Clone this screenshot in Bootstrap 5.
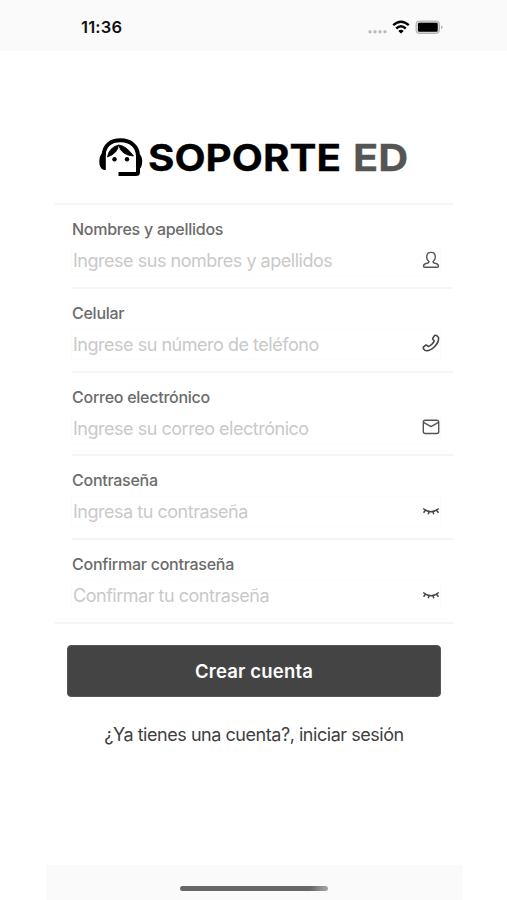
<!DOCTYPE html>
<html lang="es">
<head>
<meta charset="utf-8">
<meta name="viewport" content="width=device-width, initial-scale=1">
<title>Soporte ED</title>
<link href="https://cdn.jsdelivr.net/npm/bootstrap@5.3.0/dist/css/bootstrap.min.css" rel="stylesheet">
<style>
body{font-family:Inter,"Liberation Sans",sans-serif;background:#fff;height:900px;overflow:hidden}
.status{height:51px;background:#fafafa;padding:3px 64px 0 81px}
.clock{font-size:16.5px;font-weight:600;color:#111;letter-spacing:.2px;line-height:20px}
.brand{height:152px;padding:85px 0 0 98px}
.brand-text{font-size:37px;font-weight:700;line-height:43px;color:#000;transform-origin:0 50%;white-space:nowrap;-webkit-text-stroke:.3px currentColor}
.w-main{width:191px;transform:scaleX(1.092)}
.w-ed{width:55px;margin-left:14px;color:#555;transform:scaleX(1.12)}
.form-area{width:398px;margin-left:55px;border-top:2px solid #f5f5f5;border-bottom:2px solid #f5f5f5;height:421px}
.field{height:83.75px;margin-left:17px;padding-top:13.2px;border-bottom:2px solid #f5f5f5}
.field:last-child{border-bottom:0}
.form-label{font-size:16px;font-weight:500;line-height:22px;color:#6b6b6b;letter-spacing:-.26px}
.entry{height:31px;margin:5px 12px 0 -1px;border:1px solid #fcfcfc;width:370px}
.entry .form-control{font-size:18px;line-height:29px;color:#444;background:transparent;letter-spacing:-.48px;text-indent:1px}
.entry .form-control::placeholder{color:#c9c9c9;opacity:1}
.entry svg{flex:none;margin:-2px .5px 0 0}
.btn-create{width:374px;height:52px;margin:21px 0 0 67px;background:#444;color:#fff;font-size:18.5px;font-weight:600;letter-spacing:.18px;border-radius:4px;border:1px solid #555;padding-top:1px}
.login{font-size:18px;line-height:24px;color:#3f3f3f;margin-top:26px;letter-spacing:-.46px;padding-left:1px}
.home{width:416px;height:35px;margin-left:46px;background:#fafafa;padding-top:21px}
.home-bar{width:148px;height:5px;margin-left:134px;border-radius:3px;background:linear-gradient(90deg,#666 88%,#aaa)}
</style>
<script src="https://cdn.jsdelivr.net/npm/bootstrap@5.3.0/dist/js/bootstrap.bundle.min.js"></script>
</head>
<body class="d-flex flex-column">
<header class="status d-flex align-items-center justify-content-between">
  <span class="clock">11:36</span>
  <svg width="76" height="18" viewBox="367 18 76 18">
    <g fill="#bdbdbd"><circle cx="370" cy="31.8" r="1.7"/><circle cx="375" cy="31.8" r="1.7"/><circle cx="380" cy="31.8" r="1.7"/><circle cx="385" cy="31.8" r="1.7"/></g>
    <g fill="none" stroke="#000" stroke-width="2.4"><path d="M393.2 25.2Q401 18.3 408.8 25.2M396.2 28.5Q401 24.2 405.8 28.5"/></g>
    <path d="M398.3 30.9Q401 28.8 403.7 30.9L401 33.5Z"/>
    <rect x="416" y="21" width="23.5" height="12.5" rx="3.2" fill="#d2d2d2" stroke="#b5b5b5"/>
    <rect x="418" y="22.8" width="19.7" height="9" rx="1.2"/>
    <path d="M441 25.2q3 2 0 4z" fill="#b5b5b5"/>
  </svg>
</header>
<main>
  <div class="brand d-flex align-items-start">
    <svg width="46" height="42" viewBox="98 136 46 42" class="flex-shrink-0">
      <path d="M103.5 156C104 145 111 140.3 120.7 140.3S137.8 146 138 156V172.5Q138 174 136 174H118.5" fill="none" stroke="#000" stroke-width="4"/>
      <path d="M105.8 152.8V170H104Q99.3 168.5 99.3 161.5T103 153ZM136 152.8V170H138.5Q142.2 167.5 142.2 161.5T138.5 153Z"/>
      <path d="M107.5 157Q109 147.5 118.5 145Q118 153 107.5 157ZM118.5 145Q126 145.5 133.5 156Q121.5 155.5 118.5 145Z" stroke="#000" stroke-width=".8"/>
      <circle cx="114.5" cy="159.3" r="2.2"/><circle cx="127" cy="159.3" r="2.2"/>
    </svg>
    <div class="brand-text w-main ms-1">SOPORTE</div>
    <div class="brand-text w-ed">ED</div>
  </div>
  <form class="form-area">
    <div class="field">
      <label class="form-label d-block mb-0" for="nombre">Nombres y apellidos</label>
      <div class="entry d-flex align-items-center">
        <input id="nombre" class="form-control border-0 p-0" placeholder="Ingrese sus nombres y apellidos">
        <svg width="18" height="18" viewBox="0 0 18 18" fill="none" stroke="#555" stroke-width="1.4" stroke-linejoin="round"><path d="M7 10.5C4.5 9 4.6 6.5 4.8 5C5.2 .2 12.8 .2 13.2 5C13.4 6.5 13.5 9 11 10.5Q10.9 11.7 13 12.3Q16.5 13 16.5 15.2Q16.5 16.2 15 16.2H3Q1.5 16.2 1.5 15.2Q1.5 13 5 12.3Q7.1 11.7 7 10.5Z"/></svg>
      </div>
    </div>
    <div class="field">
      <label class="form-label d-block mb-0" for="celular">Celular</label>
      <div class="entry d-flex align-items-center">
        <input id="celular" class="form-control border-0 p-0" placeholder="Ingrese su número de teléfono">
        <svg width="18" height="18" viewBox="0 0 18 18" fill="none" stroke="#444" stroke-width="1.6" stroke-linejoin="round"><path d="M12.6 1.5C14 .8 16.2 2.3 16.6 4C17 9.5 10 16.8 4.3 16.7C2.7 16.6 .8 14.7 1.3 13.2L3.8 11.1Q4.5 10.8 5.2 11.5L6.4 12.6C8.5 12 11.6 9 12.2 6.8L11 5.5Q10.4 4.8 10.8 4.1Z"/></svg>
      </div>
    </div>
    <div class="field">
      <label class="form-label d-block mb-0" for="correo">Correo electrónico</label>
      <div class="entry d-flex align-items-center">
        <input id="correo" class="form-control border-0 p-0" placeholder="Ingrese su correo electrónico">
        <svg width="18" height="18" viewBox="0 0 18 18" fill="none" stroke="#555" stroke-width="1.4" stroke-linejoin="round"><rect x="1.3" y="2.3" width="15.4" height="13.2" rx="1.8"/><path d="M1.5 4.4L9 8.6L16.5 4.4"/></svg>
      </div>
    </div>
    <div class="field">
      <label class="form-label d-block mb-0" for="clave">Contraseña</label>
      <div class="entry d-flex align-items-center">
        <input id="clave" type="password" class="form-control border-0 p-0" placeholder="Ingresa tu contraseña">
        <svg width="18" height="18" viewBox="0 0 18 18" fill="none" stroke="#444" stroke-width="1.5"><path d="M1.2 6.5Q9 13.1 16.8 6.5M3.4 8.2L1.6 10.7M7 9.7L6.2 12.2M11 9.7L11.8 12.2M14.6 8.2L16.4 10.7"/></svg>
      </div>
    </div>
    <div class="field">
      <label class="form-label d-block mb-0" for="clave2">Confirmar contraseña</label>
      <div class="entry d-flex align-items-center">
        <input id="clave2" type="password" class="form-control border-0 p-0" placeholder="Confirmar tu contraseña">
        <svg width="18" height="18" viewBox="0 0 18 18" fill="none" stroke="#444" stroke-width="1.5"><path d="M1.2 6.5Q9 13.1 16.8 6.5M3.4 8.2L1.6 10.7M7 9.7L6.2 12.2M11 9.7L11.8 12.2M14.6 8.2L16.4 10.7"/></svg>
      </div>
    </div>
  </form>
  <button class="btn btn-create d-flex align-items-center justify-content-center px-0 pb-0" type="button">Crear cuenta</button>
  <div class="login text-center">¿Ya tienes una cuenta?, iniciar sesión</div>
</main>
<footer class="home mt-auto"><div class="home-bar"></div></footer>
</body>
</html>
